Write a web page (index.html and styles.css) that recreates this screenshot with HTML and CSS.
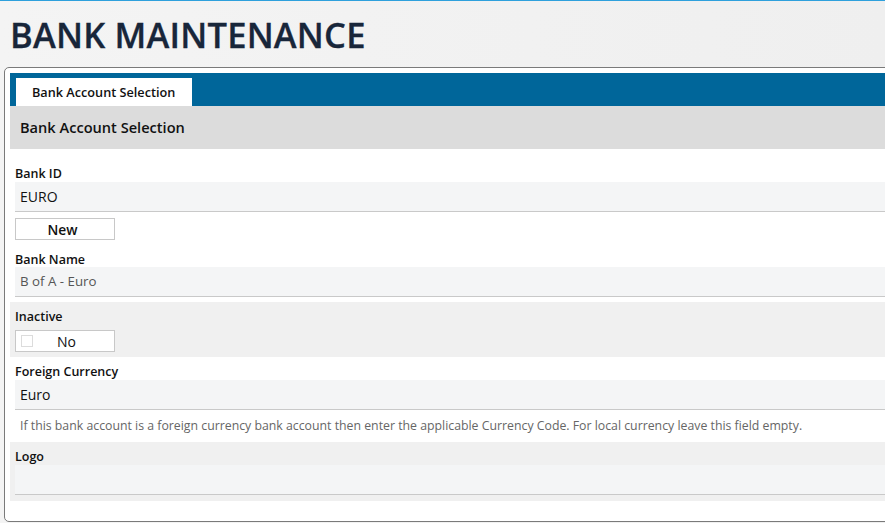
FILE: index.html
```html
<!DOCTYPE html>
<html>
<head>
<meta charset="utf-8">
<link rel="stylesheet" href="styles.css">
</head>
<body>
<div class="page">
  <header class="page-header">
    <h1 class="page-title">BANK MAINTENANCE</h1>
  </header>
  <div class="panel">
    <div class="tabbar">
      <div class="tab">Bank Account Selection</div>
    </div>
    <div class="section-title">Bank Account Selection</div>
    <div class="form">
      <div class="group group-first">
        <div class="label">Bank ID</div>
        <div class="input input-dark">EURO</div>
        <div class="btn">New</div>
        <div class="label label-gap">Bank Name</div>
        <div class="input input-muted">B of A - Euro</div>
      </div>
      <div class="group group-shaded">
        <div class="label">Inactive</div>
        <div class="toggle"><span class="checkbox"></span><span class="toggle-text">No</span></div>
      </div>
      <div class="group group-currency">
        <div class="label">Foreign Currency</div>
        <div class="input input-dark">Euro</div>
        <div class="help">If this bank account is a foreign currency bank account then enter the applicable Currency Code. For local currency leave this field empty.</div>
      </div>
      <div class="group group-shaded group-logo">
        <div class="label">Logo</div>
        <div class="input"></div>
      </div>
    </div>
  </div>
</div>
</body>
</html>
```
FILE: styles.css
```css
html, body {
  margin: 0;
  padding: 0;
  height: 100%;
  overflow: hidden;
}
body {
  font-family: "Open Sans", "Noto Sans", sans-serif;
  background: linear-gradient(90deg, #f4f4f4, #efefef);
  color: #111;
}
.page {
  border-top: 1px solid #2ea0dc;
}
.page-header {
  height: 66px;
  display: flex;
  align-items: center;
  padding-left: 10px;
}
.page-title {
  margin: 0;
  font-size: 34.5px;
  font-weight: 600;
  color: #18263a;
  letter-spacing: 0.2px;
  -webkit-text-stroke: 0.3px #18263a;
}
.panel {
  margin-left: 4px;
  margin-right: -20px;
  border: 1px solid #7a7a7a;
  border-radius: 5px;
  background: #fff;
  padding: 5px 0 20px 5px;
}
.tabbar {
  background: #00669a;
  height: 33px;
  padding: 5px 0 0 6px;
  box-sizing: border-box;
  display: flex;
}
.tab {
  background: #fff;
  width: 176px;
  height: 28px;
  box-sizing: border-box;
  padding-left: 16px;
  font-size: 12.7px;
  font-weight: 600;
  line-height: 28px;
  color: #111;
}
.section-title {
  background: #dcdcdc;
  height: 43px;
  line-height: 43px;
  padding-left: 10px;
  font-size: 14.6px;
  font-weight: 600;
  color: #111;
}
.group {
  padding: 5px 0 5px 5px;
}
.group-first {
  padding-top: 15px;
}
.group-shaded {
  background: #f0f0f0;
}
.group-currency {
  padding-bottom: 0;
}
.group-logo {
  padding-bottom: 6px;
}
.label {
  font-size: 12.5px;
  font-weight: 600;
  line-height: 20px;
  height: 18px;
  color: #111;
}
.label-gap {
  margin-top: 10px;
  height: 17px;
  line-height: 19px;
}
.input {
  height: 30px;
  box-sizing: border-box;
  background: #f4f5f6;
  border-bottom: 1px solid #c9c9c9;
  padding-left: 5px;
  font-size: 14px;
  line-height: 29px;
}
.input-dark { color: #111; }
.input-muted { color: #555; font-size: 13.3px; }
.btn {
  margin-top: 6px;
  width: 100px;
  height: 22px;
  box-sizing: border-box;
  border: 1px solid #c8c8c8;
  background: #fff;
  text-align: center;
  padding-right: 5px;
  font-size: 13.8px;
  font-weight: 600;
  line-height: 21px;
}
.toggle {
  margin-top: 5px;
  width: 100px;
  height: 22px;
  box-sizing: border-box;
  border: 1px solid #c8c8c8;
  background: #fff;
  display: flex;
  align-items: center;
}
.checkbox {
  width: 12px;
  height: 12px;
  box-sizing: border-box;
  border: 1px solid #dcdcdc;
  margin-left: 5px;
}
.toggle-text {
  margin-left: 24px;
  font-size: 14px;
  color: #111;
}
.help {
  font-size: 12.3px;
  color: #666;
  line-height: 32px;
  height: 32px;
  padding-left: 5px;
  white-space: nowrap;
}
```
